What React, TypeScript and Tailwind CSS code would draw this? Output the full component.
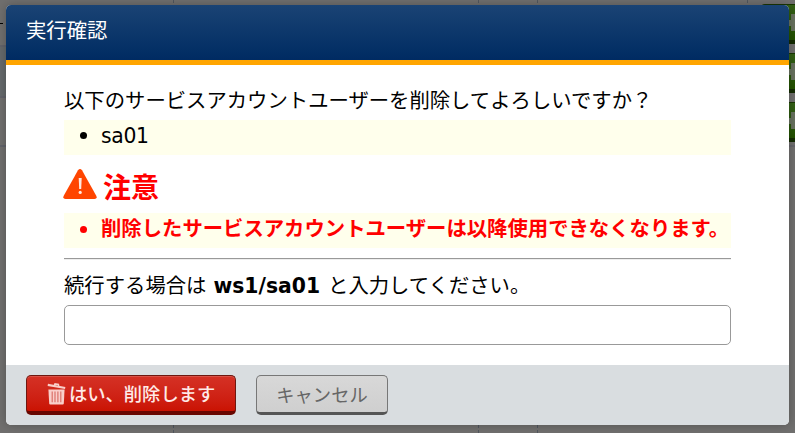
function WarningIcon() {
  return (
    <svg width="34" height="30" viewBox="0 0 34 30" className="block shrink-0" aria-hidden="true">
      <path d="M15 1.2Q17 -1 19 1.2L33.4 27Q34.4 29.8 31.5 30H2.5Q-.4 29.8.6 27Z" fill="#ff4500" />
      <path d="M15.7 9h3l-.5 11h-2z" fill="#ffe9df" />
      <circle cx="17.2" cy="23.4" r="1.6" fill="#ffe9df" />
    </svg>
  );
}

function TrashIcon() {
  return (
    <svg width="19" height="22" viewBox="0 0 19 22" className="block shrink-0" aria-hidden="true">
      <path d="M1.4 6.4h16.2l-.8 14.2q-.1.9-1 .9H3.2q-.9 0-1-.9z" fill="#f9cfca" />
      <path d="M5.2 8.6v10.6M8 8.6v10.6M10.9 8.6v10.6M13.8 8.6v10.6" fill="none" stroke="#db7168" strokeWidth="1.2" />
      <g fill="none" stroke="#f9cfca">
        <path d="M.8 1.9 18.2 5" strokeWidth="2.2" />
        <path d="M7.2 2.7 8 .9l3.4.6.3 2" strokeWidth="1.5" />
      </g>
    </svg>
  );
}

function GreenButton() {
  return (
    <div className="flex h-10 w-[34px] shrink-0 items-center justify-end rounded-l border-b-4 border-t border-b-[#142b02] border-t-[#193604] bg-linear-to-b from-[#335f16] to-[#225000]">
      <div className="h-[6px] w-[2px] bg-[#67715e]" />
      <div className="h-[17px] w-[4px] bg-[#67715e]" />
    </div>
  );
}

export default function App() {
  return (
    <div className="relative h-[433px] w-[795px] overflow-hidden bg-[#706f6e] font-['DejaVu_Sans','Noto_Sans_CJK_JP',sans-serif] text-[20.35px] text-black">
      <div className="flex h-full justify-between">
        <div className="flex w-[174px] flex-col border-r border-dashed border-[#50565e]">
          <div className="h-[47px] border-b-2 border-[#62636a] pt-[23px]">
            <div className="h-px w-[3px] bg-black" />
          </div>
          <div className="h-[51px] border-b-2 border-[#62636a] bg-[#65696b]" />
          <div className="h-[49px] border-b-2 border-[#62636a]" />
        </div>
        <div className="h-full w-[305px] border-r border-dashed border-[#50565e]" />
        <div className="h-full w-[59px] border-r border-dashed border-[#50565e]" />
        <div className="flex w-[257px] flex-col items-end">
          <div className="flex h-[147px] w-full items-start justify-between border-b-2 border-[#65656a]">
            <div className="h-full w-[210px] border-r border-dashed border-[#50565e]" />
            <div className="flex flex-col gap-[9px] pt-1">
              <GreenButton />
              <GreenButton />
              <GreenButton />
            </div>
          </div>
        </div>
      </div>

      <div className="absolute left-[6px] top-[5px] flex h-[420px] w-[783px] flex-col overflow-hidden rounded-[5px] bg-white shadow-[0_0_10px_rgba(0,0,0,0.25)]">
        <header className="flex h-[60px] shrink-0 items-center border-b-[5px] border-[#ffa500] bg-linear-to-b from-[#1a4374] to-[#002b62] pb-0.5 pl-5 text-white">
          <h1>実行確認</h1>
        </header>

        <main className="flex h-[300px] shrink-0 flex-col px-[58px] pt-[21px]">
          <p className="h-[34px] whitespace-nowrap leading-[30px]">以下のサービスアカウントユーザーを削除してよろしいですか？</p>
          <ul className="h-[35px] w-[667px] list-none bg-[#ffffec]">
            <li className="flex h-[33px] items-center gap-[13px] pl-4">
              <span className="mb-0.5 size-[7px] rounded-full bg-black" />
              <span className="ml-px tracking-[-0.3px]">sa01</span>
            </li>
          </ul>
          <div className="flex h-[58px] items-center gap-[6px] pt-2 font-bold text-[#f00]">
            <div className="-ml-px pb-2">
              <WarningIcon />
            </div>
            <h2 className="pt-px text-[28px] leading-8">注意</h2>
          </div>
          <ul className="h-[35px] w-[667px] list-none whitespace-nowrap bg-[#ffffec] font-bold text-[#f00]">
            <li className="flex h-[33px] items-center gap-[13px] pl-4">
              <span className="mb-px size-[7px] rounded-full bg-[#f00]" />
              <span className="ml-px">削除したサービスアカウントユーザーは以降使用できなくなります。</span>
            </li>
          </ul>
          <hr className="mt-[10px] h-0.5 w-[667px] border-b border-t border-b-[#eee] border-t-[#999]" />
          <label className="mt-[11px] flex h-[34px] gap-[7px] whitespace-nowrap leading-[30px]">
            <span>続行する場合は</span>
            <b>ws1/sa01</b>
            <span className="ml-px">と入力してください。</span>
          </label>
          <input aria-label="ws1/sa01" className="h-10 w-[667px] rounded-[5px] border border-[#999] bg-white px-3 outline-none" />
        </main>

        <footer className="flex h-[60px] shrink-0 items-start gap-5 bg-[#d9dde0] px-5 pt-[10px] font-['Noto_Sans_CJK_JP',sans-serif] text-[18.3px] leading-none">
          <button className="flex h-10 w-[210px] items-center rounded-[5px] border border-b-[4px] border-[#6f170f] border-b-[#680600] bg-linear-to-b from-[#d53125] to-[#ca1202] pl-5 font-medium text-[#ffeae7] shadow-[inset_0_1px_0_#d95147]">
            <TrashIcon />
            <span className="ml-[3px] whitespace-nowrap">はい、削除します</span>
          </button>
          <button className="flex h-10 w-[132px] items-center justify-center rounded-[5px] border border-b-[3px] border-[#777] border-b-[#555] bg-linear-to-b from-[#d8d8d8] to-[#cfcfcf] text-[#666]">
            キャンセル
          </button>
        </footer>
      </div>
    </div>
  );
}
